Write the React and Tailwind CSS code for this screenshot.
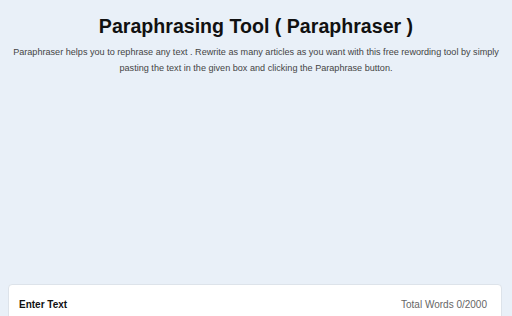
export default function App() {
  return (
    <div
      className="min-h-screen bg-[#e9f0f8] overflow-hidden"
      style={{ fontFamily: '"Liberation Sans", Arial, sans-serif' }}
    >
      <div className="pt-[14px] text-center">
        <h1 className="text-[19.6px] leading-[24px] font-bold text-[#111]">
          Paraphrasing Tool ( Paraphraser )
        </h1>
        <p className="mt-[6px] px-[10px] text-[9.1px] leading-[16px] text-[#444] whitespace-nowrap">
          Paraphraser helps you to rephrase any text . Rewrite as many articles as you want with this free rewording tool by simply
          <br />
          pasting the text in the given box and clicking the Paraphrase button.
        </p>
      </div>
      <div className="h-[208px]" />
      <div className="ml-[8px] mr-[10px] bg-white border border-[#dde3ea] rounded-[4px] h-[60px]">
        <div className="flex items-center justify-between pl-[10px] pr-[14px] pt-[12px]">
          <span className="text-[10px] font-bold text-[#111]">Enter Text</span>
          <span className="text-[10px] text-[#666]">Total Words 0/2000</span>
        </div>
      </div>
    </div>
  );
}
